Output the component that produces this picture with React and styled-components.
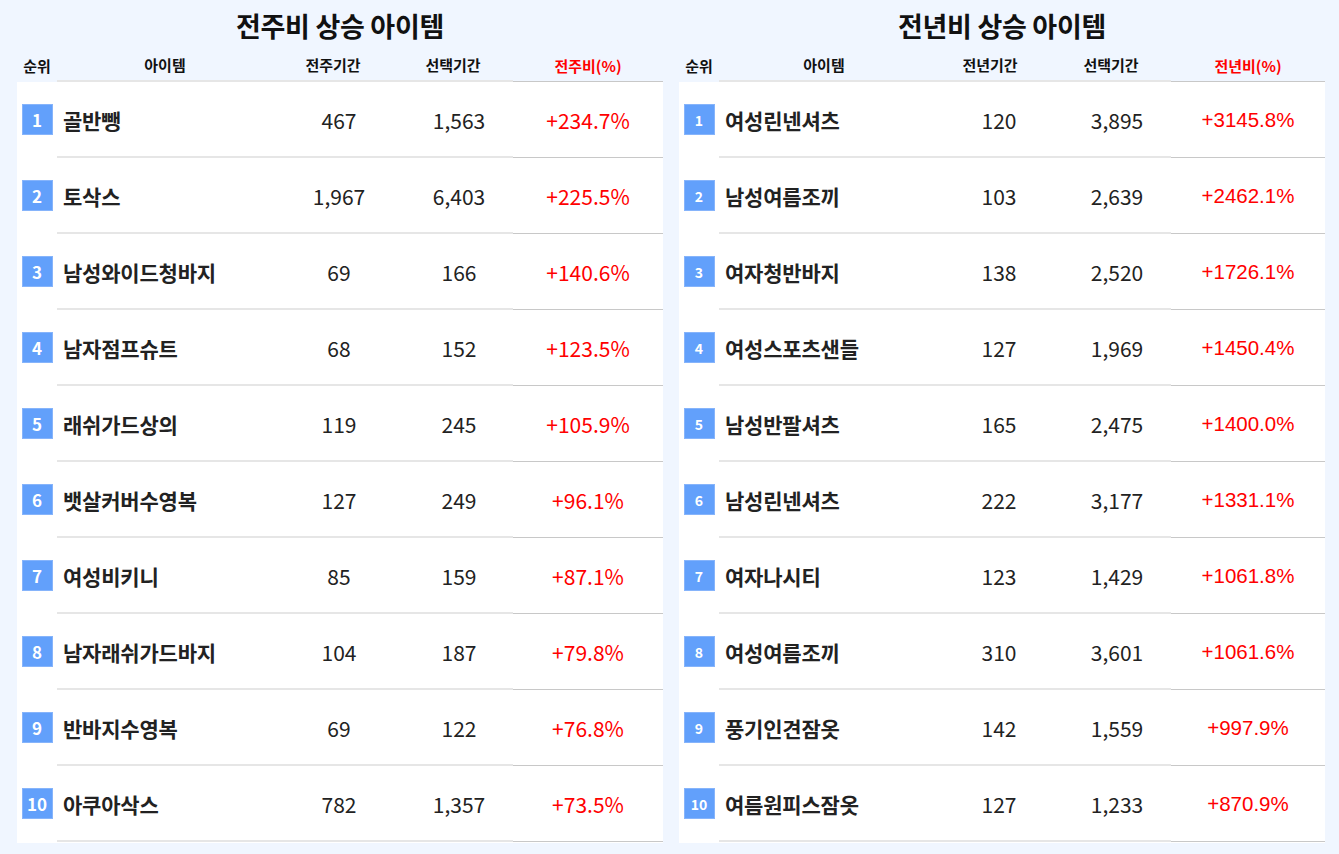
import React from "react";
import styled, { createGlobalStyle } from "styled-components";

const GlobalStyle = createGlobalStyle`
  html, body {
    margin: 0;
    padding: 0;
    background: #f0f6ff;
  }
  body {
    font-family: "Noto Sans CJK KR", "Noto Sans", sans-serif;
    color: #111;
  }
`;

const weekly = [
  ["골반뺑", "467", "1,563", "+234.7%"],
  ["토삭스", "1,967", "6,403", "+225.5%"],
  ["남성와이드청바지", "69", "166", "+140.6%"],
  ["남자점프슈트", "68", "152", "+123.5%"],
  ["래쉬가드상의", "119", "245", "+105.9%"],
  ["뱃살커버수영복", "127", "249", "+96.1%"],
  ["여성비키니", "85", "159", "+87.1%"],
  ["남자래쉬가드바지", "104", "187", "+79.8%"],
  ["반바지수영복", "69", "122", "+76.8%"],
  ["아쿠아삭스", "782", "1,357", "+73.5%"],
];

const yearly = [
  ["여성린넨셔츠", "120", "3,895", "+3145.8%"],
  ["남성여름조끼", "103", "2,639", "+2462.1%"],
  ["여자청반바지", "138", "2,520", "+1726.1%"],
  ["여성스포츠샌들", "127", "1,969", "+1450.4%"],
  ["남성반팔셔츠", "165", "2,475", "+1400.0%"],
  ["남성린넨셔츠", "222", "3,177", "+1331.1%"],
  ["여자나시티", "123", "1,429", "+1061.8%"],
  ["여성여름조끼", "310", "3,601", "+1061.6%"],
  ["풍기인견잠옷", "142", "1,559", "+997.9%"],
  ["여름원피스잠옷", "127", "1,233", "+870.9%"],
];

const Page = styled.div`
  display: flex;
  gap: 16px;
  padding: 0 14px 0 17px;
`;

const Panel = styled.section`
  width: 646px;
  display: flex;
  flex-direction: column;
`;

const Title = styled.h2`
  margin: 0;
  height: 52px;
  line-height: 52px;
  text-align: center;
  font-size: 27px;
  font-weight: 700;
  color: #111;
  letter-spacing: -0.3px;
`;

const Grid = styled.div`
  display: grid;
  grid-template-columns: ${(p) => p.$cols};
`;

const HeadRow = styled(Grid)`
  height: 30px;
`;

const HeadCell = styled.div`
  display: flex;
  align-items: center;
  justify-content: center;
  font-size: 15px;
  font-weight: 700;
  color: ${(p) => (p.$red ? "#ff0000" : "#111")};
  padding-bottom: 3px;
  box-sizing: border-box;
  border-bottom: ${(p) =>
    p.$plain ? "none" : p.$last ? "1px solid #c8c8c8" : "2px solid #e6e6e6"};
`;

const Body = styled.div`
  background: #fff;
  padding-bottom: 1px;
`;

const Row = styled(Grid)`
  height: 76px;
`;

const Cell = styled.div`
  display: flex;
  align-items: center;
  box-sizing: border-box;
  justify-content: ${(p) => (p.$left ? "flex-start" : "center")};
  padding-left: ${(p) => p.$pad || 0}px;
  padding-top: 1px;
  border-bottom: ${(p) =>
    p.$plain ? "none" : p.$last ? "1px solid #c8c8c8" : "2px solid #e6e6e6"};
`;

const Badge = styled.span`
  width: 31px;
  height: 31px;
  box-sizing: border-box;
  border: 1px solid #86b4fb;
  background: #62a0fb;
  color: #fff;
  font-size: ${(p) => p.$size}px;
  font-weight: 700;
  display: flex;
  align-items: center;
  justify-content: center;
  margin-top: -2px;
`;

const Name = styled.span`
  font-size: 21px;
  font-weight: 700;
  color: #222;
  padding-left: 6px;
  letter-spacing: -0.2px;
`;

const Num = styled.span`
  font-size: 21px;
  color: #222;
`;

const Rate = styled.span`
  font-size: ${(p) => (p.$arial ? 20.5 : 21)}px;
  color: #ff0000;
  font-family: ${(p) =>
    p.$arial ? '"Liberation Sans", Arial, sans-serif' : "inherit"};
`;

const RankTable = ({ title, prevLabel, rateLabel, rows, cols, badgeSize, arialRate, pad3 }) => (
  <Panel>
    <Title>{title}</Title>
    <HeadRow $cols={cols}>
      <HeadCell $plain>순위</HeadCell>
      <HeadCell>아이템</HeadCell>
      <HeadCell>{prevLabel}</HeadCell>
      <HeadCell>선택기간</HeadCell>
      <HeadCell $red $last>
        {rateLabel}
      </HeadCell>
    </HeadRow>
    <Body>
      {rows.map(([name, prev, cur, rate], i) => (
        <Row key={name} $cols={cols}>
          <Cell $plain>
            <Badge $size={badgeSize}>{i + 1}</Badge>
          </Cell>
          <Cell $left>
            <Name>{name}</Name>
          </Cell>
          <Cell $pad={pad3}>
            <Num>{prev}</Num>
          </Cell>
          <Cell $pad={12}>
            <Num>{cur}</Num>
          </Cell>
          <Cell $last>
            <Rate $arial={arialRate}>{rate}</Rate>
          </Cell>
        </Row>
      ))}
    </Body>
  </Panel>
);

export default function App() {
  return (
    <>
      <GlobalStyle />
      <Page>
        <RankTable
          title="전주비 상승 아이템"
          prevLabel="전주기간"
          rateLabel="전주비(%)"
          rows={weekly}
          cols="40px 1fr 120px 120px 150px"
          badgeSize={17}
          pad3={12}
        />
        <RankTable
          title="전년비 상승 아이템"
          prevLabel="전년기간"
          rateLabel="전년비(%)"
          rows={yearly}
          cols="40px 1fr 122px 120px 154px"
          badgeSize={14}
          arialRate
          pad3={18}
        />
      </Page>
    </>
  );
}
